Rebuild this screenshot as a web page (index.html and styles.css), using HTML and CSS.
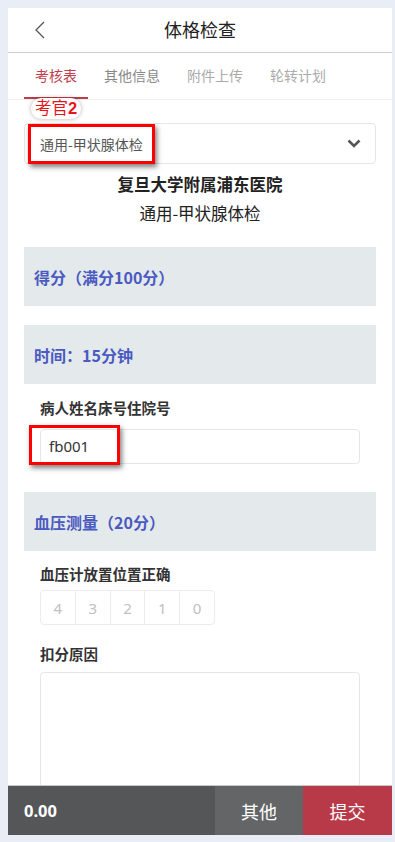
FILE: index.html
```html
<!DOCTYPE html>
<html lang="zh">
<head>
<meta charset="utf-8">
<title>体格检查</title>
<link rel="stylesheet" href="styles.css">
</head>
<body>
<div class="card">
  <header class="topbar">
    <svg class="back" width="12" height="18" viewBox="0 0 12 18"><path d="M10 1 L2 9 L10 17" fill="none" stroke="#555" stroke-width="1.3"/></svg>
    <h1 class="title">体格检查</h1>
  </header>
  <nav class="tabs">
    <span class="tab active">考核表</span>
    <span class="tab mid">其他信息</span>
    <span class="tab">附件上传</span>
    <span class="tab">轮转计划</span>
  </nav>
  <main class="content">
    <div class="select-wrap">
      <span class="stamp">考官<b>2</b></span>
      <div class="select">
        <span>通用-甲状腺体检</span>
        <svg width="14" height="9" viewBox="0 0 14 9"><path d="M1.5 1.5 L7 7 L12.5 1.5" fill="none" stroke="#555" stroke-width="2.6"/></svg>
      </div>
      <span class="redbox rb-select"></span>
    </div>
    <div class="hospital">复旦大学附属浦东医院</div>
    <div class="exam">通用-甲状腺体检</div>
    <div class="section">得分（满分100分）</div>
    <div class="section s2">时间：15分钟</div>
    <div class="field">
      <div class="label">病人姓名床号住院号</div>
      <div class="input-wrap">
        <div class="input">fb001</div>
        <span class="redbox rb-input"></span>
      </div>
    </div>
    <div class="section s3">血压测量（20分）</div>
    <div class="field">
      <div class="label l2">血压计放置位置正确</div>
      <div class="scores">
        <span>4</span><span>3</span><span>2</span><span>1</span><span>0</span>
      </div>
      <div class="label l3">扣分原因</div>
      <div class="textarea"></div>
    </div>
  </main>
  <footer class="bottombar">
    <div class="total">0.00</div>
    <div class="btn other">其他</div>
    <div class="btn submit">提交</div>
  </footer>
</div>
</body>
</html>
```

FILE: styles.css
```css
* { box-sizing: border-box; }
html, body { margin: 0; padding: 0; }
body {
  background: #e9eef6;
  padding: 8px 3px 7px 8px;
  font-family: "Noto Sans CJK SC", "Noto Sans", sans-serif;
  color: #333;
  overflow: hidden;
}
.card {
  position: relative;
  width: 384px;
  height: 827px;
  background: #fff;
  overflow: hidden;
}
.topbar {
  position: relative;
  height: 45px;
  border-bottom: 1px solid #cfcfcf;
  display: flex;
  align-items: center;
  justify-content: center;
}
.back { position: absolute; left: 26px; top: 13px; }
.title {
  margin: 0;
  font-size: 18px;
  font-weight: 400;
  color: #222;
  line-height: 24px;
  margin-top: -2px;
}
.tabs {
  display: flex;
  gap: 5px;
  height: 47px;
  padding-left: 16px;
  border-bottom: 1px solid #eee;
}
.tab {
  padding: 0 11px;
  font-size: 14px;
  line-height: 44px;
  color: #aaa;
  border-bottom: 2px solid transparent;
  height: 46px;
}
.tab.mid { color: #888; }
.tab.active { color: #c13c4c; border-bottom-color: #c13c4c; }
.content { padding: 23px 16px 0 16px; }
.select-wrap { position: relative; }
.select {
  height: 41px;
  border: 1px solid #e6e6e6;
  border-radius: 4px;
  display: flex;
  align-items: center;
  justify-content: space-between;
  padding: 0 14px 0 15px;
  font-size: 14px;
  color: #555;
}
.stamp {
  position: absolute;
  left: 7px;
  top: -25px;
  padding: 0 4px 1px;
  background: #fff;
  border-radius: 10px;
  box-shadow: 0 0 4px rgba(0,0,0,0.3);
  color: #e8141b;
  font-size: 16.5px;
  line-height: 19px;
  z-index: 2;
}
.stamp b { font-family: "Liberation Sans", sans-serif; font-weight: 700; }
.redbox {
  position: absolute;
  border: 3px solid #ff0000;
  box-shadow: 2px 3px 5px rgba(0,0,0,0.5);
  pointer-events: none;
}
.rb-select { left: 4px; top: 1px; width: 127px; height: 40px; }
.hospital {
  margin-top: 8px;
  text-align: center;
  font-size: 16.5px;
  font-weight: 700;
  color: #222;
  line-height: 24px;
}
.exam {
  margin-top: 5px;
  text-align: center;
  font-size: 16.5px;
  color: #222;
  line-height: 24px;
}
.section {
  margin-top: 22px;
  height: 59px;
  background: #e4e9ec;
  padding-left: 10px;
  display: flex;
  align-items: center;
  font-size: 16px;
  font-weight: 700;
  color: #4a5ac0;
}
.section.s2 { margin-top: 19px; }
.section.s3 { margin-top: 28px; }
.field { padding: 0 16px; }
.label {
  margin-top: 14px;
  font-size: 14.5px;
  font-weight: 700;
  color: #333;
  line-height: 20px;
}
.label.l2 { margin-top: 13px; }
.label.l3 { margin-top: 19px; }
.input-wrap { position: relative; margin-top: 11px; }
.input {
  height: 35px;
  border: 1px solid #e6e6e6;
  border-radius: 4px;
  padding-left: 8px;
  font-family: "Noto Sans", sans-serif;
  font-size: 15px;
  line-height: 33px;
  color: #333;
}
.rb-input { left: -11px; top: -4px; width: 91px; height: 40px; }
.scores {
  margin-top: 6px;
  display: flex;
  width: 175px;
  height: 35px;
  border: 1px solid #ececec;
  border-radius: 4px;
}
.scores span {
  flex: 1;
  display: flex;
  align-items: center;
  justify-content: center;
  font-family: "Noto Sans", sans-serif;
  font-size: 15px;
  color: #c0c0c0;
  border-left: 1px solid #ececec;
}
.scores span:first-child { border-left: none; }
.textarea {
  margin-top: 8px;
  height: 160px;
  border: 1px solid #e6e6e6;
  border-radius: 4px;
}
.bottombar {
  position: absolute;
  left: 0;
  right: 0;
  bottom: 0;
  height: 50px;
  display: flex;
  border-top: 1px solid #c8c8c8;
  z-index: 3;
}
.total {
  width: 207px;
  background: #555658;
  color: #fff;
  font-family: "Noto Sans", sans-serif;
  font-weight: 700;
  font-size: 16.5px;
  display: flex;
  align-items: center;
  padding-left: 16px;
}
.btn {
  display: flex;
  align-items: center;
  justify-content: center;
  color: #fff;
  font-size: 18px;
}
.other { width: 88px; background: #646567; }
.submit { flex: 1; background: #b83a48; }
```
